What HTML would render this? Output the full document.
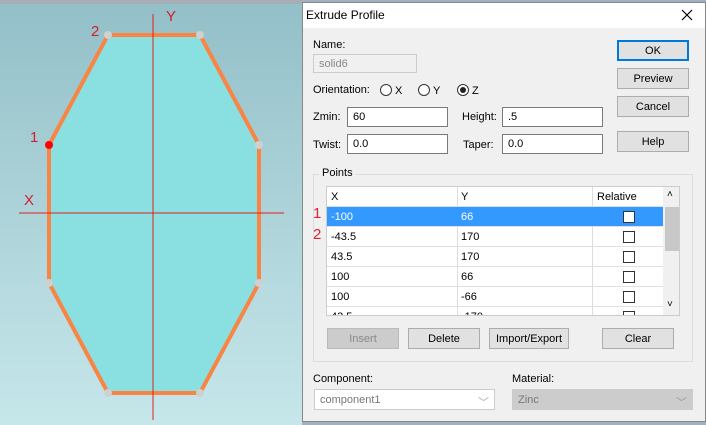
<!DOCTYPE html>
<html><head><style>
body{margin:0;width:706px;height:425px;overflow:hidden;font-family:"Liberation Sans",sans-serif;font-size:11px;color:#000;position:relative;background:#a0b0c0}
.a{position:absolute}
.inp{position:absolute;background:#fff;border:1px solid #7a7a7a;height:18px;box-sizing:border-box;padding:3px 5px;font-size:11px}
.btn{position:absolute;background:#e1e1e1;border:1px solid #adadad;box-sizing:border-box;text-align:center;font-size:11px;line-height:20px}
.rad{position:absolute;width:12px;height:12px;border:1px solid #333;border-radius:50%;box-sizing:border-box;background:#fff}
.cb{position:absolute;width:12px;height:12px;border:1px solid #333;box-sizing:border-box;background:#fff;left:296px}
.row{position:absolute;left:0;width:336px;height:20px;border-bottom:1px solid #e0e0e0;box-sizing:border-box}
.row span{position:absolute;top:4px}
</style></head><body>
<div class="a" style="left:0;top:0;width:302px;height:425px;background:linear-gradient(#93bfc8,#c6e7ea)"></div>
<div class="a" style="left:0;top:0;width:302px;height:4px;background:#a8aeb8"></div>
<svg class="a" style="left:0;top:0" width="302" height="425">
<polygon points="49,145 108,35 200,35 259,145 259,283 200,393 108,393 49,283" fill="#8adfe0" stroke="#f98443" stroke-width="4"/>
<line x1="153" y1="14" x2="153" y2="420" stroke="#e02020" stroke-width="1"/>
<line x1="19" y1="213" x2="284" y2="213" stroke="#e02020" stroke-width="1"/>
<g fill="#d0d0d0"><circle cx="108" cy="35" r="4"/><circle cx="200" cy="35" r="4"/><circle cx="259" cy="145" r="4"/><circle cx="259" cy="283" r="4"/><circle cx="200" cy="393" r="4"/><circle cx="108" cy="393" r="4"/><circle cx="49" cy="283" r="4"/></g>
<circle cx="49" cy="145" r="4" fill="#f00"/>
<g fill="#d02030" font-family="Liberation Sans" font-size="15"><text x="166" y="21">Y</text><text x="91" y="36">2</text><text x="30" y="142">1</text><text x="24" y="205">X</text></g>
</svg>
<div class="a" style="left:302px;top:2px;width:404px;height:420px;background:#f0f0f0;border:1px solid #888;box-sizing:border-box"></div>
<div class="a" style="left:303px;top:3px;width:402px;height:25px;background:#fff"></div>
<div class="a" style="left:306px;top:8px;font-size:12px">Extrude Profile</div>
<svg class="a" style="left:681px;top:9px" width="12" height="12"><path d="M1 1L11 11M11 1L1 11" stroke="#000" stroke-width="1.2"/></svg>
<div class="a" style="left:313px;top:39px">Name:</div>
<div class="inp" style="left:313px;top:54px;width:104px;height:19px;background:#f0f0f0;border-color:#ccc;color:#888">solid6</div>
<div class="a" style="left:313px;top:84px">Orientation:</div>
<div class="rad" style="left:380px;top:84px"></div><div class="a" style="left:395px;top:85px">X</div>
<div class="rad" style="left:418px;top:84px"></div><div class="a" style="left:433px;top:85px">Y</div>
<div class="rad" style="left:457px;top:84px"></div><div class="a" style="left:460px;top:87px;width:6px;height:6px;border-radius:50%;background:#222"></div><div class="a" style="left:472px;top:85px">Z</div>
<div class="a" style="left:313px;top:111px">Zmin:</div><div class="inp" style="left:347px;top:107px;width:101px;height:20px">60</div>
<div class="a" style="left:462px;top:111px">Height:</div><div class="inp" style="left:502px;top:107px;width:101px;height:20px">.5</div>
<div class="a" style="left:313px;top:139px">Twist:</div><div class="inp" style="left:347px;top:134px;width:101px;height:20px">0.0</div>
<div class="a" style="left:463px;top:139px">Taper:</div><div class="inp" style="left:502px;top:134px;width:101px;height:20px">0.0</div>
<div class="btn" style="left:617px;top:40px;width:72px;height:21px;border:2px solid #0078d7;line-height:18px">OK</div>
<div class="btn" style="left:617px;top:68px;width:72px;height:21px">Preview</div>
<div class="btn" style="left:617px;top:96px;width:72px;height:21px">Cancel</div>
<div class="btn" style="left:617px;top:131px;width:72px;height:21px">Help</div>
<div class="a" style="left:313px;top:174px;width:380px;height:188px;border:1px solid #dcdcdc;box-sizing:border-box"></div>
<div class="a" style="left:319px;top:167px;background:#f0f0f0;padding:0 3px">Points</div>
<div class="a" style="left:326px;top:186px;width:354px;height:130px;background:#fff;border:1px solid #ccc;box-sizing:border-box;overflow:hidden">
<div class="row" style="top:0;border-bottom:1px solid #ddd"><span style="left:4px">X</span><span style="left:134px">Y</span><span style="left:270px">Relative</span></div>
<div class="a" style="left:130px;top:0;width:1px;height:130px;background:#ddd"></div>
<div class="a" style="left:265px;top:0;width:1px;height:130px;background:#ddd"></div>
<div class="row" style="top:20px;background:#3399ff;color:#fff"><span style="left:4px">-100</span><span style="left:134px">66</span></div><div class="cb" style="top:24px"></div>
<div class="row" style="top:40px"><span style="left:4px">-43.5</span><span style="left:134px">170</span></div><div class="cb" style="top:44px"></div>
<div class="row" style="top:60px"><span style="left:4px">43.5</span><span style="left:134px">170</span></div><div class="cb" style="top:64px"></div>
<div class="row" style="top:80px"><span style="left:4px">100</span><span style="left:134px">66</span></div><div class="cb" style="top:84px"></div>
<div class="row" style="top:100px"><span style="left:4px">100</span><span style="left:134px">-66</span></div><div class="cb" style="top:104px"></div>
<div class="row" style="top:120px"><span style="left:4px">43.5</span><span style="left:134px">-170</span></div><div class="cb" style="top:124px"></div>
<div class="a" style="left:336px;top:0;width:17px;height:130px;background:#f0f0f0"></div>
<div class="a" style="left:338px;top:20px;width:14px;height:44px;background:#c8c8c8"></div>
<div class="a" style="left:340px;top:2px;font-size:10px">˄</div>
<div class="a" style="left:340px;top:112px;font-size:10px">˅</div>
</div>
<div class="a" style="left:313px;top:205px;color:#e02030;font-size:15px">1</div>
<div class="a" style="left:313px;top:226px;color:#e02030;font-size:15px">2</div>
<div class="btn" style="left:327px;top:328px;width:72px;height:21px;background:#ccc;border-color:#bbb;color:#888">Insert</div>
<div class="btn" style="left:408px;top:328px;width:72px;height:21px">Delete</div>
<div class="btn" style="left:489px;top:328px;width:80px;height:21px">Import/Export</div>
<div class="btn" style="left:602px;top:328px;width:72px;height:21px">Clear</div>
<div class="a" style="left:313px;top:373px">Component:</div>
<div class="inp" style="left:314px;top:389px;width:181px;height:21px;border-color:#ccc;color:#777;padding-top:4px">component1<span style="position:absolute;right:5px;color:#aaa">﹀</span></div>
<div class="a" style="left:512px;top:373px">Material:</div>
<div class="inp" style="left:512px;top:389px;width:181px;height:21px;background:#ccc;border-color:#ccc;color:#777;padding-top:4px">Zinc<span style="position:absolute;right:5px;color:#999">﹀</span></div>
</body></html>
